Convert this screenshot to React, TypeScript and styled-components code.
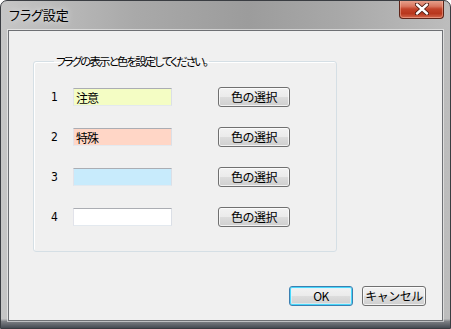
import React from "react";
import styled, { createGlobalStyle } from "styled-components";

const GlobalStyle = createGlobalStyle`
  html, body {
    margin: 0;
    padding: 0;
    background: #ffffff;
  }
  body {
    font-family: "Noto Sans CJK JP", "Liberation Sans", sans-serif;
    font-feature-settings: "palt";
  }
`;

const Window = styled.div`
  width: 451px;
  height: 329px;
  box-sizing: border-box;
  display: flex;
  flex-direction: column;
  border: 1px solid #3a3d42;
  border-radius: 7px 7px 0 0;
  background:
    linear-gradient(to bottom, rgba(0, 0, 0, 0) 97.2%, #7c7f84 98%, #454a52 100%),
    linear-gradient(
      to right,
      #c6c6c6 0%,
      #a9a9a9 30%,
      #9c9c9c 55%,
      #a8a8a8 75%,
      #bdbdbd 100%
    );
  overflow: hidden;
`;

const TitleBar = styled.div`
  height: 29px;
  flex: none;
  display: flex;
  align-items: flex-start;
  justify-content: space-between;
  padding-left: 8px;
  padding-right: 6px;
`;

const Title = styled.div`
  margin-top: 5px;
  font-size: 13px;
  line-height: 17px;
  color: #000;
  text-shadow: 0 0 6px rgba(255, 255, 255, 0.9);
`;

const CloseButton = styled.div`
  width: 45px;
  height: 19px;
  margin-top: -1px;
  box-sizing: border-box;
  display: flex;
  align-items: center;
  justify-content: center;
  border: 1px solid #5e2418;
  border-top: none;
  border-radius: 0 0 4px 4px;
  background: linear-gradient(
    to bottom,
    #e9a793 0%,
    #d9765f 35%,
    #c2432a 50%,
    #b8371d 75%,
    #d2674c 100%
  );
  box-shadow: inset 0 0 0 1px rgba(255, 200, 180, 0.45);
`;

const Client = styled.div`
  flex: 1;
  margin: 0 7px 7px 7px;
  display: flex;
  flex-direction: column;
  background: #f0f0f0;
  border: 1px solid #6e7074;
  box-shadow: 0 0 0 1px rgba(255, 255, 255, 0.5);
`;

const GroupBox = styled.fieldset`
  width: 304px;
  box-sizing: border-box;
  margin: 23px 0 0 24px;
  padding: 19px 0 24px 17px;
  border: 1px solid #d5dfe5;
  border-radius: 3px;
  box-shadow: inset 1px 1px 0 #ffffff;
`;

const Legend = styled.legend`
  margin-left: 3px;
  padding: 0 2px;
  font-size: 11.5px;
  line-height: 14px;
  letter-spacing: -1.9px;
  color: #000;
`;

const FlagGrid = styled.div`
  display: grid;
  grid-template-columns: 22px 145px 72px;
  grid-auto-rows: 20px;
  row-gap: 20px;
  align-items: center;
`;

const Num = styled.span`
  font-family: "DejaVu Sans Condensed", "Liberation Sans", sans-serif;
  font-size: 12px;
  color: #000;
`;

const ColorBox = styled.div<{ $bg: string }>`
  width: 99px;
  height: 18px;
  box-sizing: border-box;
  padding: 0 2px;
  display: flex;
  align-items: center;
  font-size: 12px;
  letter-spacing: -1px;
  color: #000;
  background: ${(p) => p.$bg};
  border: 1px solid;
  border-color: #abadb3 #dbdfe6 #e3e9ef #e2e3ea;
`;

const Button = styled.button<{ $default?: boolean; $w: number }>`
  width: ${(p) => p.$w}px;
  height: 20px;
  box-sizing: border-box;
  padding: 0;
  font-family: inherit;
  font-size: 12px;
  line-height: 16px;
  letter-spacing: -0.5px;
  color: #000;
  border: 1px solid ${(p) => (p.$default ? "#3c7fb1" : "#707070")};
  border-radius: 3px;
  background: linear-gradient(
    to bottom,
    #f2f2f2 0%,
    #ebebeb 49%,
    #dddddd 50%,
    #cfcfcf 100%
  );
  box-shadow: ${(p) =>
    p.$default
      ? "inset 0 0 0 1px #48d8fb, inset 0 0 0 2px rgba(220, 245, 255, 0.6)"
      : "inset 0 0 0 1px rgba(255, 255, 255, 0.7)"};
`;

const Footer = styled.div`
  margin-top: auto;
  display: flex;
  justify-content: flex-end;
  gap: 9px;
  padding: 0 16px 14px 0;
`;

const flags = [
  { n: 1, label: "注意", bg: "#f4fdc4" },
  { n: 2, label: "特殊", bg: "#ffd6c6" },
  { n: 3, label: "", bg: "#c8ebfc" },
  { n: 4, label: "", bg: "#ffffff" },
];

function CloseIcon() {
  return (
    <svg width="14" height="12" viewBox="0 0 14 12">
      <path
        d="M2 1.5 L12 10.5 M12 1.5 L2 10.5"
        stroke="#4a1a10"
        strokeWidth="4.2"
        strokeLinecap="round"
      />
      <path
        d="M2 1.5 L12 10.5 M12 1.5 L2 10.5"
        stroke="#ffffff"
        strokeWidth="2.4"
        strokeLinecap="round"
      />
    </svg>
  );
}

export default function App() {
  return (
    <>
      <GlobalStyle />
      <Window>
        <TitleBar>
          <Title>フラグ設定</Title>
          <CloseButton>
            <CloseIcon />
          </CloseButton>
        </TitleBar>
        <Client>
          <GroupBox>
            <Legend>フラグの表示と色を設定してください。</Legend>
            <FlagGrid>
              {flags.map((f) => (
                <React.Fragment key={f.n}>
                  <Num>{f.n}</Num>
                  <ColorBox $bg={f.bg}>{f.label}</ColorBox>
                  <Button $w={72}>色の選択</Button>
                </React.Fragment>
              ))}
            </FlagGrid>
          </GroupBox>
          <Footer>
            <Button $w={64} $default>
              OK
            </Button>
            <Button $w={64}>キャンセル</Button>
          </Footer>
        </Client>
      </Window>
    </>
  );
}
